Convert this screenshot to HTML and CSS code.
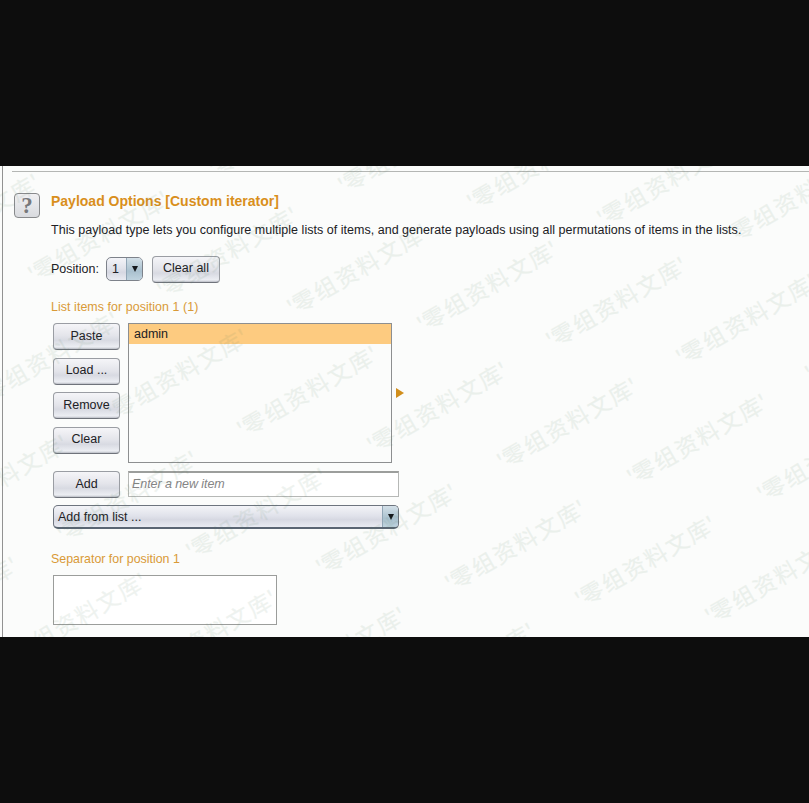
FILE: index.html
```html
<!DOCTYPE html>
<html lang="en">
<head>
<meta charset="utf-8">
<title>Payload Options</title>
<link rel="stylesheet" href="styles.css">
</head>
<body>
<main class="panel">
  <div class="frame">
    <div class="rule"></div>
    <div class="content">
      <button class="help">?</button>
      <section class="options">
        <h1 class="title">Payload Options [Custom iterator]</h1>
        <p class="description">This payload type lets you configure multiple lists of items, and generate payloads using all permutations of items in the lists.</p>
        <div class="position">
          <span class="position-label">Position:</span>
          <div class="select small"><span class="value">1</span><span class="arrow"><svg width="6" height="6" viewBox="0 0 6 6"><path d="M0 0H6L3 6Z"/></svg></span></div>
          <button class="btn clear-all">Clear all</button>
        </div>
        <h2 class="subtitle list-title">List items for position 1 (1)</h2>
        <div class="list-row">
          <div class="buttons">
            <button class="btn">Paste</button>
            <button class="btn">Load ...</button>
            <button class="btn">Remove</button>
            <button class="btn">Clear</button>
          </div>
          <div class="list"><div class="item">admin</div></div>
          <svg class="expand" width="8" height="10" viewBox="0 0 8 10"><path d="M0 0L8 5L0 10Z"/></svg>
        </div>
        <div class="add-row">
          <button class="btn">Add</button>
          <input class="entry" placeholder="Enter a new item">
        </div>
        <div class="select wide"><span class="value">Add from list ...</span><span class="arrow"><svg width="6" height="6" viewBox="0 0 6 6"><path d="M0 0H6L3 6Z"/></svg></span></div>
        <h2 class="subtitle separator-title">Separator for position 1</h2>
        <div class="separator"></div>
      </section>
    </div>
  </div>
  <svg class="watermark" width="809" height="471" viewBox="0 166 809 471">
    <defs><text id="mark" transform="rotate(-30)" x="-3" y="17.5" dx="0 -2 0 0 0 0 0 -1.5">'零组资料文库'</text></defs>
    <use href="#mark" transform="translate(79 145)"/>
    <use href="#mark" transform="translate(-51 128)"/>
    <use href="#mark" transform="translate(208 161)"/>
    <use href="#mark" transform="translate(338 178)"/>
    <use href="#mark" transform="translate(467 195)"/>
    <use href="#mark" transform="translate(597 211)"/>
    <use href="#mark" transform="translate(726 228)"/>
    <use href="#mark" transform="translate(-101 250)"/>
    <use href="#mark" transform="translate(28 267)"/>
    <use href="#mark" transform="translate(157 283)"/>
    <use href="#mark" transform="translate(287 300)"/>
    <use href="#mark" transform="translate(417 317)"/>
    <use href="#mark" transform="translate(546 333)"/>
    <use href="#mark" transform="translate(676 350)"/>
    <use href="#mark" transform="translate(805 366)"/>
    <use href="#mark" transform="translate(-22 388)"/>
    <use href="#mark" transform="translate(107 405)"/>
    <use href="#mark" transform="translate(237 422)"/>
    <use href="#mark" transform="translate(367 438)"/>
    <use href="#mark" transform="translate(497 454)"/>
    <use href="#mark" transform="translate(627 470)"/>
    <use href="#mark" transform="translate(757 487)"/>
    <use href="#mark" transform="translate(-73 511)"/>
    <use href="#mark" transform="translate(57 527)"/>
    <use href="#mark" transform="translate(186 544)"/>
    <use href="#mark" transform="translate(316 560)"/>
    <use href="#mark" transform="translate(445 576)"/>
    <use href="#mark" transform="translate(575 592)"/>
    <use href="#mark" transform="translate(705 609)"/>
    <use href="#mark" transform="translate(-123 633)"/>
    <use href="#mark" transform="translate(6 649)"/>
    <use href="#mark" transform="translate(136 666)"/>
    <use href="#mark" transform="translate(265 683)"/>
    <use href="#mark" transform="translate(394 699)"/>
  </svg>
</main>
</body>
</html>
```
FILE: styles.css
```css
* { box-sizing: border-box; }
body {
  margin: 0;
  height: 803px;
  padding-top: 166px;
  background: #0d0d0d;
  overflow: hidden;
  font: 12.5px/16px "Liberation Sans", Arial, sans-serif;
  color: #202024;
}
.panel {
  position: relative;
  height: 471px;
  padding-left: 2px;
  background: #fbfcfb;
  overflow: hidden;
}
.frame { height: 471px; border-left: 1px solid #929292; }
.rule { height: 6px; margin-left: 9px; border-bottom: 1px solid #b4b6b4; }
.content { display: flex; padding: 21px 0 0 11px; }
.help {
  width: 26px;
  height: 25px;
  margin: 0 11px 0 0;
  padding: 0;
  border: 1px solid #888a8c;
  border-radius: 4px;
  background: linear-gradient(#f0f0f2, #d9dbdf);
  color: #77797c;
  font: bold 23px/23px "Liberation Serif", serif;
}
.options { width: 740px; }
.title { margin: 0; font-size: 14px; line-height: 17px; color: #d98f1c; white-space: nowrap; }
.description { margin: 12px 0 0; white-space: nowrap; line-height: 17px; letter-spacing: 0.025px; }
.position { display: flex; align-items: center; height: 28px; margin-top: 16px; }
.position-label { width: 55px; }
.btn {
  width: 67px;
  height: 27px;
  margin: 0;
  padding: 0 0 2px;
  border: 1px solid #9a9da3;
  border-bottom-color: #6f737b;
  border-radius: 4px;
  background: linear-gradient(#f5f5f8, #e3e4ea 48%, #d8dae2 65%, #eceef3 92%, #b9bcc4);
  color: #202024;
  font: inherit;
}
.clear-all { width: 68px; margin-left: 9px; }
.select {
  display: flex;
  align-items: center;
  border: 1px solid #6d747e;
  border-bottom: 2px solid #5a6573;
  border-radius: 5px;
  background: linear-gradient(#f3f4f8, #e0e2ea 48%, #d6d8e2 65%, #e9ebf2);
  overflow: hidden;
}
.value { flex: 1; padding-left: 5px; }
.arrow {
  display: flex;
  align-items: center;
  justify-content: center;
  width: 16px;
  align-self: stretch;
  border-left: 1px solid #91a6b6;
  background: linear-gradient(#d3e0e8, #a9c0ce 60%, #bfd3df);
}
.arrow path { fill: #15191d; }
.small { width: 37px; height: 24px; border-color: #7d828a; border-bottom-width: 1px; }
.wide { width: 346px; height: 24px; margin: 7px 0 0 2px; }
.wide .value { padding-left: 4px; }
.subtitle { margin: 16px 0 0; font-size: 12.4px; line-height: 17px; font-weight: normal; color: #d99a37; }
.list-title { letter-spacing: 0.07px; }
.list-row { display: flex; align-items: center; height: 140px; margin: 7px 0 0 2px; }
.buttons { display: flex; flex-direction: column; align-self: flex-start; gap: 7.5px; }
.list { width: 264px; height: 140px; margin-left: 8px; border: 1px solid #8d8f90; background: #fbfcfb; }
.item { height: 20px; padding-left: 5px; background: #fdcb80; line-height: 20px; }
.expand { margin-left: 4px; fill: #d18e1b; }
.add-row { display: flex; margin: 8px 0 0 2px; }
.entry {
  width: 271px;
  height: 26px;
  margin-left: 8px;
  padding: 0 3px 2px;
  border: 1px solid #b6b8b6;
  border-top: 2px solid #9c9e9c;
  border-radius: 0;
  background: #fff;
  font: inherit;
}
.entry::placeholder { color: #858585; font-style: italic; opacity: 1; letter-spacing: -0.07px; }
.separator-title { margin-top: 22px; }
.separator { width: 224px; height: 50px; margin: 7px 0 0 2px; border: 1px solid #9b9d9b; background: #fff; }
.watermark { position: absolute; top: 0; left: 0; pointer-events: none; }
#mark {
  font: 22.5px "Noto Sans CJK SC", sans-serif;
  letter-spacing: 2px;
  fill: rgb(80, 125, 90);
  stroke: rgb(80, 125, 90);
  stroke-width: 0.3px;
  opacity: 0.09;
}
```
